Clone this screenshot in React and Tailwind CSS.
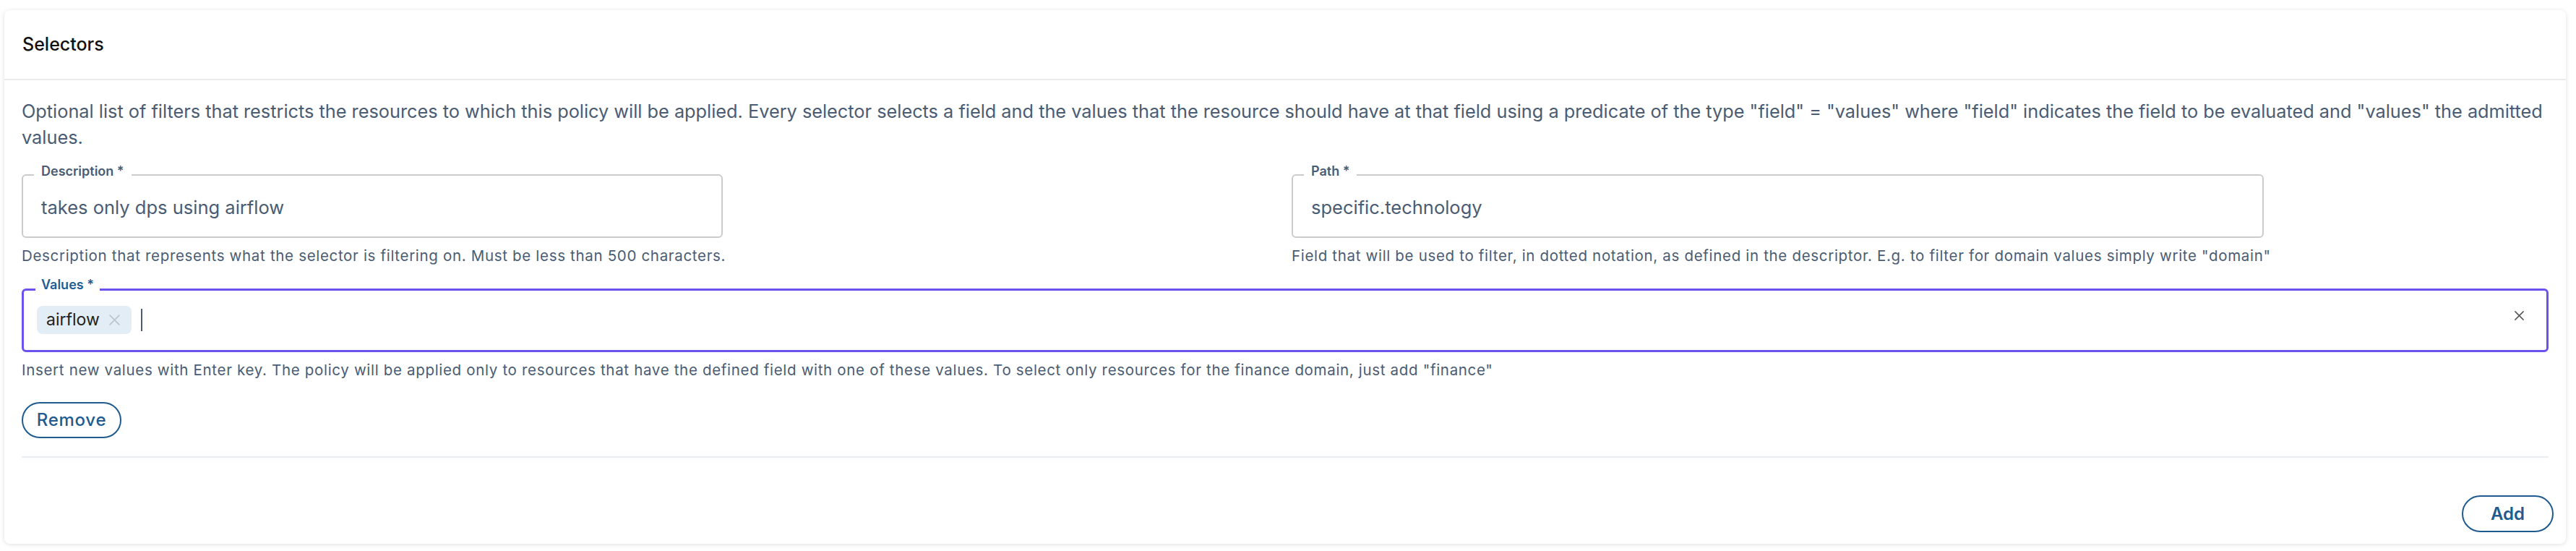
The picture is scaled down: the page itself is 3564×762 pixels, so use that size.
function ClearIcon({ className }) {
  return (
    <svg viewBox="0 0 16 16" className={className} fill="none" stroke="currentColor" strokeWidth="1.6" strokeLinecap="round">
      <path d="M2 2l12 12M14 2L2 14" />
    </svg>
  );
}

function TextField({ label, value, helper, width }) {
  return (
    <div className={width}>
      <fieldset className="rounded-[6px] border-2 border-[#cbcbcb] pl-[15px] pr-[15px] pt-[13px] pb-[22px]">
        <legend className="px-[10px] pb-[10px] text-[18px] leading-[18px] font-semibold text-[#4a5c73]">
          {label}
        </legend>
        <div className="pl-[10px] text-[25.5px] leading-[36px] text-[#4a5c73]">{value}</div>
      </fieldset>
      <p className="mt-[11px] whitespace-nowrap text-[20.5px] leading-[27px] tracking-[0.033em] text-[#4a5c73]">
        {helper}
      </p>
    </div>
  );
}

export default function App() {
  return (
    <div className="min-h-screen bg-white pl-[6px] pr-[14px] pt-[14px] font-['Inter',sans-serif]">
      <div className="rounded-[8px] bg-white shadow-[0_1px_6px_rgba(0,0,0,0.13)]">
        {/* header */}
        <div className="flex h-[97px] items-center border-b-2 border-[#ebebeb] px-[25px]">
          <h2 className="text-[25px] font-medium text-[#111]">Selectors</h2>
        </div>

        <div className="px-6 pt-[25px]">
          <p className="text-[25.3px] leading-[36px] text-[#4a5c73]">
            Optional list of filters that restricts the resources to which this policy will be applied. Every selector
            selects a field and the values that the resource should have at that field using a predicate of the type
            "field" = "values" where "field" indicates the field to be evaluated and "values" the admitted values.
          </p>

          <div className="mt-[20px] grid grid-cols-2 gap-x-[18px]">
            <TextField
              width="w-[970px]"
              label="Description *"
              value="takes only dps using airflow"
              helper="Description that represents what the selector is filtering on. Must be less than 500 characters."
            />
            <TextField
              width="w-[1345px]"
              label="Path *"
              value="specific.technology"
              helper={'Field that will be used to filter, in dotted notation, as defined in the descriptor. E.g. to filter for domain values simply write "domain"'}
            />
          </div>

          {/* values autocomplete */}
          <fieldset className="mt-[18px] rounded-[6px] border-[3px] border-[#6a52ef] pl-[16px] pr-[30px] pt-[7px] pb-[22px]">
            <legend className="px-[8px] pb-[12px] text-[18px] leading-[18px] font-semibold text-[#1c5d94]">Values *</legend>
            <div className="flex h-[40px] items-center">
              <span className="ml-[2px] flex h-[39px] items-center gap-[12px] rounded-[8px] bg-[#e3edf5] pl-[13px] pr-[15px] text-[23px] text-[#222]">
                airflow
                <ClearIcon className="h-[17px] w-[17px] text-[#bcc5ce]" />
              </span>
              <span className="ml-[13px] h-[31px] w-[2px] bg-[#4a5c73]" />
              <ClearIcon className="ml-auto h-[15px] w-[15px] -translate-y-[6px] text-[#555]" />
            </div>
          </fieldset>
          <p className="mt-[11px] text-[20.5px] leading-[27px] tracking-[0.033em] text-[#4a5c73]">
            Insert new values with Enter key. The policy will be applied only to resources that have the defined field
            with one of these values. To select only resources for the finance domain, just add "finance"
          </p>

          <button className="mt-[31px] h-[50px] w-[138px] rounded-full border-2 border-[#1f5b8e] text-[24px] font-medium tracking-[0.03em] text-[#1f5b8e]">
            Remove
          </button>
          <div className="mt-[25px] h-[2px] bg-[#e9eef3]" />

          <div className="-mr-[7px] flex justify-end pt-[52px] pb-[16px]">
            <button className="h-[51px] w-[127px] rounded-full border-2 border-[#1f5b8e] text-[24px] font-semibold text-[#1f5b8e]">
              Add
            </button>
          </div>
        </div>
      </div>
    </div>
  );
}
